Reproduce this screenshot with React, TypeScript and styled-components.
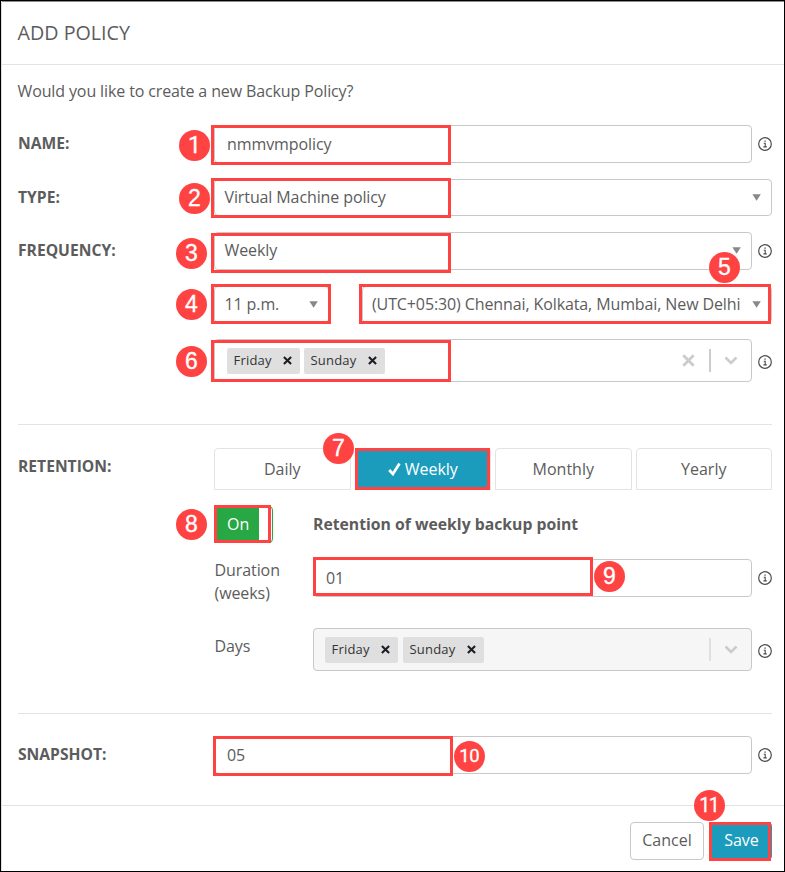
import React from "react";
import styled, { createGlobalStyle } from "styled-components";

const GlobalStyle = createGlobalStyle`
  *, *::before, *::after { box-sizing: border-box; }
  body {
    margin: 0;
    background: #fff;
    color: #5c5c5c;
    font: 16px/24px "Open Sans", "Noto Sans", sans-serif;
  }
`;

const Dialog = styled.main`
  position: relative;
  width: 785px;
  height: 872px;
  border: 1px solid #000;
  box-shadow: inset 1px 0 0 #e0e0e0, inset 0 1px 0 #8c8c8c;
  overflow: hidden;
  display: flex;
  flex-direction: column;
`;

const Header = styled.header`
  flex: none;
  height: 64px;
  padding: 0 16.5px;
  display: flex;
  align-items: center;
  border-bottom: 1px solid #e3e3e3;
`;

const Title = styled.h1`
  margin: 0;
  font-size: 19.7px;
  font-weight: 400;
`;

const Body = styled.section`
  flex: none;
  height: 740px;
  padding: 14px 12px 0 17px;
`;

const Intro = styled.p`
  margin: 0 0 22px -0.5px;
  letter-spacing: -0.12px;
`;

const Row = styled.div<{ $gap?: number }>`
  display: grid;
  grid-template-columns: 196px 558px;
  align-items: start;
  margin-bottom: ${(p) => p.$gap ?? 16}px;
`;

const Label = styled.label<{ $top?: number }>`
  font-weight: 700;
  font-size: 15.65px;
  padding-top: ${(p) => p.$top ?? 6}px;
`;

const FieldLine = styled.div`
  display: flex;
  align-items: center;
  justify-content: space-between;
`;

const TextBox = styled.div`
  flex: 1;
  height: 38px;
  border: 1px solid #c8c8c8;
  border-radius: 4px;
  padding: 6px 12px 0 12px;
  letter-spacing: -0.08px;
`;

const SelectBox = styled(TextBox)<{ $height?: number }>`
  height: ${(p) => p.$height ?? 38}px;
  padding: 5px 10px 0 9.5px;
  display: flex;
  justify-content: space-between;
  white-space: nowrap;
  letter-spacing: -0.11px;
`;

const Arrow = styled.svg`
  flex: none;
  width: 9px;
  height: 7px;
  margin-top: 9px;
`;

const InfoSvg = styled.svg<{ $low?: boolean }>`
  flex: none;
  width: 14px;
  height: 14px;
  margin-left: 6px;
  margin-top: ${(p) => (p.$low ? 2 : 0)}px;
`;

const SplitLine = styled.div`
  display: grid;
  grid-template-columns: 115px 410.5px;
  justify-content: space-between;
`;

const MultiSelect = styled.div<{ $muted?: boolean }>`
  flex: 1;
  height: 43px;
  border: 1px solid #c8c8c8;
  border-radius: 4px;
  background: ${(p) => (p.$muted ? "#f6f6f6" : "#fff")};
  padding: 0 13px 0 ${(p) => (p.$muted ? 11 : 12)}px;
  display: flex;
  align-items: center;
`;

const Chips = styled.div<{ $gap: number }>`
  flex: 1;
  display: flex;
  gap: ${(p) => p.$gap}px;
`;

const Chip = styled.span<{ $width: number }>`
  width: ${(p) => p.$width}px;
  height: 26px;
  padding: 0 8px 0 6.5px;
  border-radius: 2px;
  background: #dfdfdf;
  color: #333;
  font-size: 13px;
  letter-spacing: 0.2px;
  line-height: 25px;
  display: flex;
  align-items: center;
  justify-content: space-between;
`;

const Divider = styled.i<{ $muted?: boolean }>`
  width: 2px;
  height: 23px;
  margin: 0 13px 0 14px;
  background: ${(p) => (p.$muted ? "#e0e0e0" : "#ccc")};
`;

const Rule = styled.hr`
  height: 1px;
  border: 0;
  margin: 0;
  background: #e3e3e3;
`;

const TabsArea = styled.div`
  padding-top: 23px;
`;

const Tabs = styled.div`
  display: grid;
  grid-template-columns: repeat(4, 1fr);
  gap: 4px;
`;

const Tab = styled.button<{ $active?: boolean }>`
  height: 42px;
  padding: 0 0 1px;
  border: 1px solid #e3e3e3;
  border-radius: 4px 4px 0 0;
  background: ${(p) => (p.$active ? "#1b9cbd" : "#fff")};
  color: ${(p) => (p.$active ? "#fff" : "#5c5c5c")};
  font: inherit;
  display: flex;
  align-items: center;
  justify-content: center;
  gap: 4px;
`;

const Retention = styled.div`
  display: grid;
  grid-template-columns: 99px 1fr;
  align-items: start;
  margin-left: 196px;
`;

const RetentionBlock = styled.div`
  display: grid;
  grid-template-rows: 37px 46px 43px;
  height: 207px;
  align-content: start;
  & > :nth-child(2) { margin-top: 16px; }
  & > :nth-child(3) { margin-top: 39px; }
`;

const SnapshotRow = styled(Row)`
  margin-top: 22px;
`;

const Toggle = styled.div`
  width: 59px;
  height: 37px;
  border: 1px solid #28a745;
  border-radius: 4px;
  background: linear-gradient(90deg, #28a745 44px, #fff 44px);
  color: #fff;
  line-height: 35px;
  padding-left: 12px;
`;

const Heading = styled.strong`
  font-size: 15.75px;
  padding-top: 6px;
`;

const SideLabel = styled.span<{ $top?: number }>`
  line-height: 23px;
  padding: ${(p) => p.$top ?? 0}px 0 0 0.5px;
  letter-spacing: -0.08px;
`;

const Footer = styled.footer`
  flex: 1;
  border-top: 1px solid #e3e3e3;
  padding: 16px 12px 0 0;
  display: flex;
  justify-content: flex-end;
  gap: 7px;
`;

const Button = styled.button<{ $primary?: boolean }>`
  width: ${(p) => (p.$primary ? 61 : 74)}px;
  height: 38px;
  padding: 0 0 2px;
  border: 1px solid ${(p) => (p.$primary ? "#1b9cbd" : "#c8c8c8")};
  border-radius: 4px;
  background: ${(p) => (p.$primary ? "#1b9cbd" : "#fff")};
  color: ${(p) => (p.$primary ? "#fff" : "#5c5c5c")};
  font: inherit;
`;

const Highlight = styled.i<{ $x: number; $y: number; $w: number; $h: number }>`
  position: absolute;
  left: ${(p) => p.$x - 1}px;
  top: ${(p) => p.$y - 1}px;
  width: ${(p) => p.$w}px;
  height: ${(p) => p.$h}px;
  border: 3px solid #ff4343;
`;

const Badge = styled.b<{ $x: number; $y: number; $size?: number; $face?: string; $track?: number }>`
  position: absolute;
  left: ${(p) => p.$x - 16.6}px;
  top: ${(p) => p.$y - 16.6}px;
  width: 31.2px;
  height: 31.2px;
  border-radius: 50%;
  background: #ff4343;
  color: #fff;
  font: 400 ${(p) => p.$size ?? 23}px/31px ${(p) => p.$face ?? '"Liberation Sans"'}, sans-serif;
  -webkit-text-stroke: 0.3px #fff;
  letter-spacing: ${(p) => p.$track ?? 0}px;
  text-indent: ${(p) => p.$track ?? 0}px;
  text-align: center;
`;

const Info = ({ low }: { low?: boolean }) => (
  <InfoSvg $low={low} viewBox="0 0 14 14" fill="none" stroke="#4c4c4c">
    <circle cx="7" cy="7" r="6.3" strokeWidth="1.2" />
    <path d="M5.7 6.2H7.2V9.7M5.4 9.9H8.8" strokeWidth="1.1" />
    <path d="M6.4 4.1H7.7" strokeWidth="1.4" />
  </InfoSvg>
);

const Caret = () => (
  <Arrow viewBox="0 0 9 7">
    <path d="M.4 .3H8.8L4.6 6.7Z" fill="#888" />
  </Arrow>
);

const Cross = ({ size = 9, color = "#1c1c24", width = 2.3 }) => (
  <svg width={size} height={size} viewBox="0 0 10 10">
    <path d="M1 1L9 9M9 1L1 9" stroke={color} strokeWidth={width} />
  </svg>
);

const Chevron = () => (
  <svg width="14" height="9" viewBox="0 0 14 9" fill="none">
    <path d="M1.5 1.5L7 7L12.5 1.5" stroke="#ccc" strokeWidth="2.6" />
  </svg>
);

const DayChips = ({ gap }: { gap: number }) => (
  <Chips $gap={gap}>
    <Chip $width={73}>Friday<Cross /></Chip>
    <Chip $width={81}>Sunday<Cross /></Chip>
  </Chips>
);

const highlights = [
  [211, 125, 240, 40], [211, 178, 240, 40], [211, 233, 240, 40],
  [211, 284, 120, 40], [359, 284, 412, 40], [211, 340, 240, 42],
  [355, 448, 135, 42], [214, 505, 57, 38], [313, 557, 280, 39],
  [213, 736, 240, 40], [709, 822, 62, 39],
];

const badges = [
  { x: 194.5, y: 145.3, face: "Roboto" },
  { x: 194.5, y: 198.5 },
  { x: 191.5, y: 253.5 },
  { x: 191.5, y: 304.3 },
  { x: 724.5, y: 267.3 },
  { x: 191.5, y: 361.3 },
  { x: 338.5, y: 448.4 },
  { x: 191.5, y: 524.4 },
  { x: 609.4, y: 576.4 },
  { x: 469.4, y: 756.4, face: "Roboto", size: 18.5, track: -0.4 },
  { x: 709.4, y: 805.4, face: "Roboto", size: 19.5, track: -1.5 },
];

export default function App() {
  return (
    <>
      <GlobalStyle />
      <Dialog>
        <Header><Title>ADD POLICY</Title></Header>
        <Body>
          <Intro>Would you like to create a new Backup Policy?</Intro>
          <Row>
            <Label>NAME:</Label>
            <FieldLine><TextBox>nmmvmpolicy</TextBox><Info /></FieldLine>
          </Row>
          <Row>
            <Label>TYPE:</Label>
            <SelectBox $height={37}>Virtual Machine policy<Caret /></SelectBox>
          </Row>
          <Row>
            <Label>FREQUENCY:</Label>
            <FieldLine><SelectBox>Weekly<Caret /></SelectBox><Info /></FieldLine>
          </Row>
          <Row>
            <span />
            <SplitLine>
              <SelectBox $height={37}>11 p.m.<Caret /></SelectBox>
              <SelectBox $height={37}>(UTC+05:30) Chennai, Kolkata, Mumbai, New Delhi<Caret /></SelectBox>
            </SplitLine>
          </Row>
          <Row $gap={42}>
            <span />
            <FieldLine>
              <MultiSelect>
                <DayChips gap={4} />
                <Cross size={13} color="#ccc" width={2.2} />
                <Divider />
                <Chevron />
              </MultiSelect>
              <Info low />
            </FieldLine>
          </Row>
          <Rule />
          <Row>
            <Label $top={29}>RETENTION:</Label>
            <TabsArea>
              <Tabs>
                <Tab>Daily</Tab>
                <Tab $active>
                  <svg width="13" height="14" viewBox="0 0 13 14" fill="none">
                    <path d="M1.2 8L4.9 12L11.5 1.5" stroke="#fff" strokeWidth="2.7" />
                  </svg>
                  Weekly
                </Tab>
                <Tab>Monthly</Tab>
                <Tab>Yearly</Tab>
              </Tabs>
            </TabsArea>
          </Row>
          <RetentionBlock>
            <Retention>
              <Toggle>On</Toggle>
              <Heading>Retention of weekly backup point</Heading>
            </Retention>
            <Retention>
              <SideLabel>Duration (weeks)</SideLabel>
              <FieldLine><TextBox>01</TextBox><Info /></FieldLine>
            </Retention>
            <Retention>
              <SideLabel $top={7}>Days</SideLabel>
              <FieldLine>
                <MultiSelect $muted>
                  <DayChips gap={5} />
                  <Divider $muted />
                  <Chevron />
                </MultiSelect>
                <Info low />
              </FieldLine>
            </Retention>
          </RetentionBlock>
          <Rule />
          <SnapshotRow>
            <Label>SNAPSHOT:</Label>
            <FieldLine><TextBox>05</TextBox><Info /></FieldLine>
          </SnapshotRow>
        </Body>
        <Footer>
          <Button>Cancel</Button>
          <Button $primary>Save</Button>
        </Footer>
        {highlights.map(([x, y, w, h], i) => (
          <Highlight key={i} $x={x} $y={y} $w={w} $h={h} />
        ))}
        {badges.map(({ x, y, face, size, track }, i) => (
          <Badge key={i} $x={x} $y={y} $face={face} $size={size} $track={track}>
            {i + 1}
          </Badge>
        ))}
      </Dialog>
    </>
  );
}
